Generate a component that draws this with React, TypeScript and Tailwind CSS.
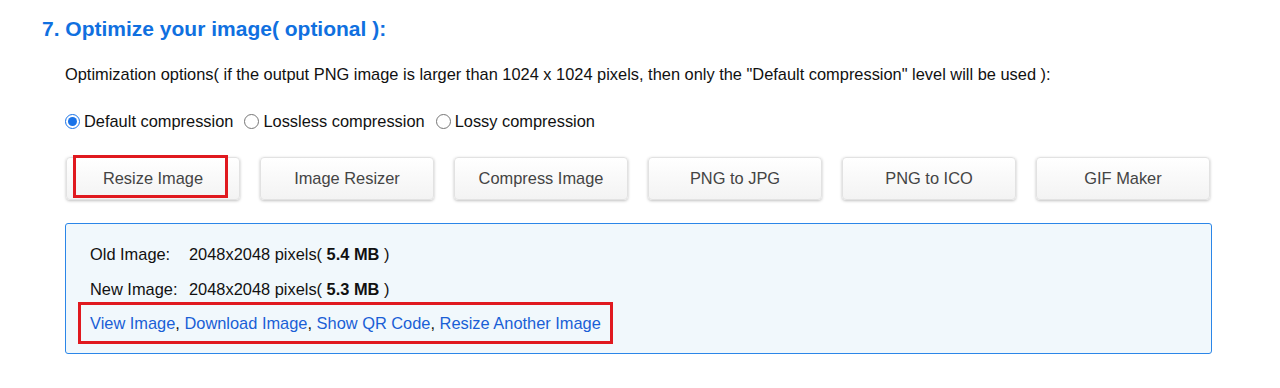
import React from "react";

const tools = [
  "Resize Image",
  "Image Resizer",
  "Compress Image",
  "PNG to JPG",
  "PNG to ICO",
  "GIF Maker",
];

function Radio({ checked, label }: { checked?: boolean; label: string }) {
  return (
    <label className="flex items-center gap-[4px]">
      {checked ? (
        <span className="w-[15px] h-[15px] rounded-full border-[1.5px] border-[#1a73e8] flex items-center justify-center">
          <span className="w-[9px] h-[9px] rounded-full bg-[#1a73e8]" />
        </span>
      ) : (
        <span className="w-[15px] h-[15px] rounded-full border border-[#767676] bg-white" />
      )}
      <span>{label}</span>
    </label>
  );
}

export default function App() {
  return (
    <main
      className="w-[1280px] h-[388px] bg-white text-[16.4px] text-[#222]"
      style={{ fontFamily: '"Liberation Sans", Arial, sans-serif' }}
    >
      <div className="pl-[42px] pt-[17px]">
        <h2 className="text-[21px] font-bold text-[#1070e0] leading-[24px]">
          7. Optimize your image( optional ):
        </h2>
      </div>

      <div className="pl-[65px] pr-[68px]">
        <p className="mt-[23px] leading-[20px] text-[#111]">
          Optimization options( if the output PNG image is larger than 1024 x 1024 pixels, then only the "Default compression" level will be used ):
        </p>

        {/* compression radios */}
        <div className="mt-[27px] flex items-center gap-[11px] leading-[20px] text-[#111]">
          <Radio checked label="Default compression" />
          <Radio label="Lossless compression" />
          <Radio label="Lossy compression" />
        </div>

        {/* tool buttons */}
        <div className="mt-[26px] flex gap-[20px] pl-[1px]">
          {tools.map((t, i) => (
            <div key={t} className="relative">
              <button className="w-[174px] h-[43px] rounded-[4px] border border-[#e2e2e2] bg-gradient-to-b from-white to-[#f3f3f3] shadow-[0_1px_3px_rgba(0,0,0,0.25)] text-[#444] text-[16.4px]">
                {t}
              </button>
              {i === 0 && (
                <div className="absolute left-[7px] top-[-2px] w-[155px] h-[43px] border-[3px] border-[#e0191f] pointer-events-none" />
              )}
            </div>
          ))}
        </div>

        {/* result box */}
        <div className="mt-[23px] h-[131px] rounded-[3px] border border-[#2b86e8] bg-[#f1f8fc] pl-[24px] pt-[20px]">
          <div className="flex leading-[20px] text-[#111]">
            <span className="w-[99px]">Old Image:</span>
            <span>
              2048x2048 pixels( <b>5.4 MB</b> )
            </span>
          </div>
          <div className="flex mt-[15px] leading-[20px] text-[#111]">
            <span className="w-[99px]">New Image:</span>
            <span>
              2048x2048 pixels( <b>5.3 MB</b> )
            </span>
          </div>
          <div className="mt-[3px] -ml-[12px] inline-flex items-center h-[42px] px-[9px] border-[3px] border-[#e0191f] text-[#1a5fd6]">
            <a href="#">View Image</a>
            <span className="text-[#111]">,&nbsp;</span>
            <a href="#">Download Image</a>
            <span className="text-[#111]">,&nbsp;</span>
            <a href="#">Show QR Code</a>
            <span className="text-[#111]">,&nbsp;</span>
            <a href="#">Resize Another Image</a>
          </div>
        </div>
      </div>
    </main>
  );
}
